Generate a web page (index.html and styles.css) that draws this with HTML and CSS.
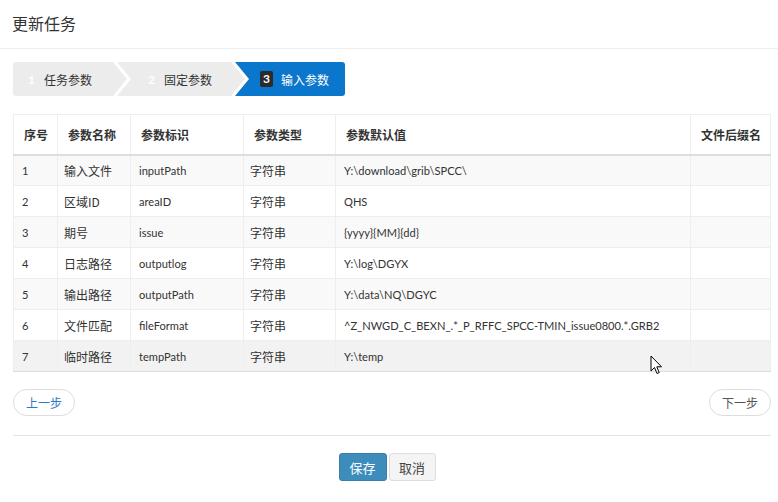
FILE: index.html
```html
<!DOCTYPE html>
<html lang="zh">
<head>
<meta charset="utf-8">
<title>更新任务</title>
<link rel="stylesheet" href="styles.css">
</head>
<body>
<div class="modal">
  <div class="modal-header">更新任务</div>
  <div class="modal-body">
    <div class="steps">
      <div class="step step-first"><span class="num">1</span><span class="label">任务参数</span></div>
      <div class="step step-mid"><span class="num">2</span><span class="label">固定参数</span></div>
      <div class="step step-last active"><span class="badge">3</span><span class="label">输入参数</span></div>
    </div>
    <table class="params">
      <thead>
        <tr>
          <th class="c1">序号</th>
          <th class="c2">参数名称</th>
          <th class="c3">参数标识</th>
          <th class="c4">参数类型</th>
          <th class="c5">参数默认值</th>
          <th class="c6">文件后缀名</th>
        </tr>
      </thead>
      <tbody>
        <tr><td>1</td><td class="zh">输入文件</td><td>inputPath</td><td class="zh">字符串</td><td>Y:\download\grib\SPCC\</td><td></td></tr>
        <tr><td>2</td><td class="zh">区域ID</td><td>areaID</td><td class="zh">字符串</td><td>QHS</td><td></td></tr>
        <tr><td>3</td><td class="zh">期号</td><td>issue</td><td class="zh">字符串</td><td>{yyyy}{MM}{dd}</td><td></td></tr>
        <tr><td>4</td><td class="zh">日志路径</td><td>outputlog</td><td class="zh">字符串</td><td>Y:\log\DGYX</td><td></td></tr>
        <tr><td>5</td><td class="zh">输出路径</td><td>outputPath</td><td class="zh">字符串</td><td>Y:\data\NQ\DGYC</td><td></td></tr>
        <tr><td>6</td><td class="zh">文件匹配</td><td>fileFormat</td><td class="zh">字符串</td><td>^Z_NWGD_C_BEXN_.*_P_RFFC_SPCC-TMIN_issue0800.*.GRB2</td><td></td></tr>
        <tr class="hover"><td>7</td><td class="zh">临时路径</td><td>tempPath</td><td class="zh">字符串</td><td>Y:\temp</td><td></td></tr>
      </tbody>
    </table>
    <div class="pager">
      <button class="pill prev">上一步</button>
      <button class="pill next">下一步</button>
    </div>
  </div>
  <div class="modal-footer">
    <button class="btn btn-primary">保存</button>
    <button class="btn btn-default">取消</button>
  </div>
  <svg class="cursor" width="14" height="21" viewBox="0 0 14 21"><path d="M1 1 L1 16 L4.5 12.5 L7 18.5 L9.2 17.6 L6.8 11.8 L11.5 11.8 Z" fill="#fff" stroke="#000" stroke-width="1" stroke-linejoin="round"/></svg>
</div>
</body>
</html>
```
FILE: styles.css
```css
html, body {
  margin: 0;
  padding: 0;
  background: #fff;
}
body {
  font-family: "Noto Sans CJK SC", "Noto Sans", sans-serif;
  color: #333;
  font-size: 13px;
}
.modal {
  position: relative;
  width: 778px;
  height: 502px;
}
.modal-header {
  height: 48px;
  line-height: 46px;
  padding-left: 12px;
  font-size: 16px;
  color: #333;
  border-bottom: 1px solid #eeeeee;
}
.modal-body {
  padding: 13px 7px 0 13px;
}
.steps {
  display: flex;
  height: 34px;
}
.step {
  display: flex;
  align-items: center;
  height: 34px;
  background: #ececec;
  color: #333;
  font-size: 12px;
}
.step .num {
  color: #fff;
  font-family: "Lato", sans-serif;
  font-weight: bold;
  font-size: 12px;
  margin-right: 9px;
}
.step-first {
  width: 114px;
  padding-left: 15px;
  box-sizing: border-box;
  border-radius: 3px 0 0 3px;
  clip-path: polygon(0 0, calc(100% - 14px) 0, 100% 50%, calc(100% - 14px) 100%, 0 100%);
}
.step-mid {
  width: 128px;
  margin-left: -10px;
  padding-left: 31px;
  box-sizing: border-box;
  clip-path: polygon(0 0, calc(100% - 14px) 0, 100% 50%, calc(100% - 14px) 100%, 0 100%, 14px 50%);
}
.step-last {
  width: 110px;
  margin-left: -10px;
  padding-left: 25px;
  box-sizing: border-box;
  border-radius: 0 3px 3px 0;
  clip-path: polygon(0 0, 100% 0, 100% 100%, 0 100%, 14px 50%);
}
.step.active {
  background: #0a76cc;
  color: #fff;
}
.badge {
  display: inline-block;
  width: 13px;
  height: 16px;
  line-height: 16px;
  text-align: center;
  background: #2b2b2b;
  color: #fff;
  border-radius: 2px;
  font-family: "Lato", sans-serif;
  font-weight: bold;
  font-size: 12px;
  margin-right: 8px;
}
.params {
  margin-top: 18px;
  width: 758px;
  border-collapse: collapse;
  border: 1px solid #eeeeee;
  table-layout: fixed;
}
.params th {
  height: 40px;
  box-sizing: border-box;
  text-align: left;
  padding: 0 10px;
  font-weight: bold;
  font-size: 12px;
  color: #333;
  border: 1px solid #eeeeee;
  border-bottom: 2px solid #dddddd;
  white-space: nowrap;
}
.params .c1 { width: 44px; }
.params .c2 { width: 73px; }
.params .c3 { width: 113px; }
.params .c4 { width: 92px; }
.params .c5 { width: 355px; }
.params .c6 { width: auto; }
.params td {
  height: 31px;
  box-sizing: border-box;
  padding: 0 8px;
  font-family: "Lato", "Noto Sans CJK SC", sans-serif;
  font-size: 11.1px;
  color: #333;
  border-left: 1px solid #eeeeee;
  border-right: 1px solid #eeeeee;
  border-top: 1px solid #eeeeee;
  white-space: nowrap;
}
.params td.zh {
  font-family: "Noto Sans CJK SC", sans-serif;
  font-size: 12px;
  padding-left: 6px;
}
.params tbody tr:nth-child(odd) { background: #f9f9f9; }
.params tbody tr.hover { background: #f2f2f2; }
.params tbody tr:last-child td { border-bottom: 1px solid #dddddd; }
.pager {
  display: flex;
  justify-content: space-between;
  margin-top: 17px;
  padding-bottom: 19px;
  border-bottom: 1px solid #e5e5e5;
}
.pill {
  width: 62px;
  height: 27px;
  border: 1px solid #dddddd;
  border-radius: 14px;
  background: #fff;
  font-family: "Noto Sans CJK SC", sans-serif;
  font-size: 12px;
  padding: 0;
}
.pill.prev { color: #2a7bbf; }
.pill.next { color: #555; }
.modal-footer {
  display: flex;
  justify-content: center;
  gap: 2px;
  padding-top: 17px;
  padding-right: 4px;
}
.btn {
  height: 28px;
  padding: 0;
  border-radius: 3px;
  font-family: "Noto Sans CJK SC", sans-serif;
  font-size: 13px;
  border: 1px solid transparent;
  white-space: nowrap;
}
.btn-primary {
  background: #3c8dbc;
  border-color: #367fa9;
  color: #fff;
  width: 48px;
}
.btn-default {
  background: #f4f4f4;
  border-color: #dddddd;
  color: #444;
  width: 47px;
}
.cursor {
  position: absolute;
  left: 650px;
  top: 355px;
}
```
